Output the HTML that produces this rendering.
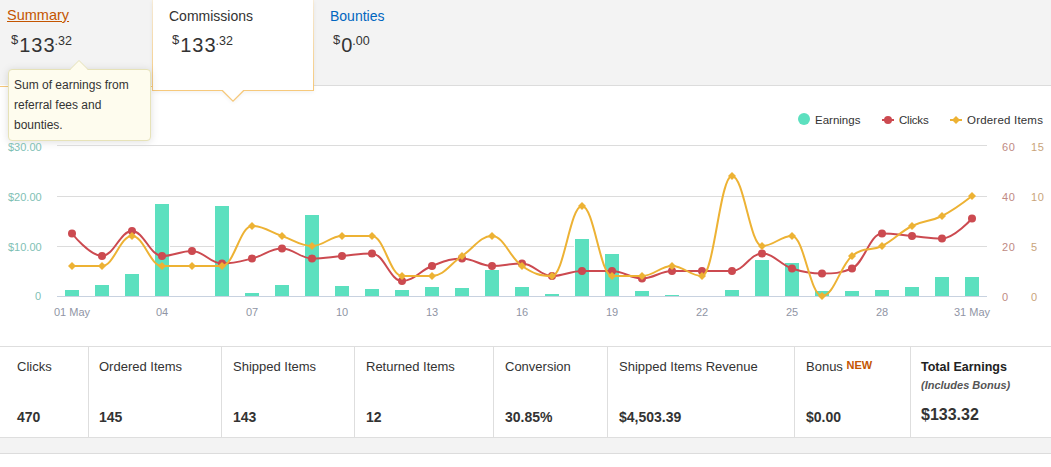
<!DOCTYPE html>
<html><head><meta charset="utf-8">
<style>
*{margin:0;padding:0;box-sizing:border-box}
html,body{width:1051px;height:467px;overflow:hidden;background:#fff;font-family:"Liberation Sans",sans-serif;color:#333;position:relative}
.abs{position:absolute;white-space:nowrap}
.tabbar{position:absolute;left:0;top:0;width:1051px;height:85px;background:#f3f3f3}
.grayline{position:absolute;left:314px;top:85px;width:737px;height:1px;background:#dcdcdc}
.orgline{position:absolute;left:0;top:86px;width:152px;height:1px;background:#f6c97c}
.tabt{font-size:14px;line-height:16px}
.amt{font-size:20px;line-height:24px;color:#333}
.amt .d{margin-left:1px;letter-spacing:1px}
.amt .c2{margin-left:-1px}
.amt sup{font-size:11px;vertical-align:top;position:relative;top:-2px;color:#333}
.amt .c{font-size:12.5px;vertical-align:top;position:relative;top:-4px;color:#333}
.amt .s{top:-5px;font-size:13px}
.tip{position:absolute;left:8px;top:69px;width:143px;height:72px;background:#fefcee;border:1px solid #e6e2b8;border-radius:4px;box-shadow:0 1px 8px rgba(0,0,0,.13);font-size:12px;line-height:20px;color:#333;padding:5px 0 0 5px}
.leg{font-size:11.5px;color:#333;line-height:14px;margin-top:1px}
.yl{position:absolute;left:8px;font-size:11px;line-height:12px;color:#7fbfb5;white-space:nowrap}
.yr1{position:absolute;left:1002px;font-size:11px;letter-spacing:.6px;line-height:12px;color:#c08a84;white-space:nowrap}
.yr2{position:absolute;left:1031px;font-size:11px;letter-spacing:.6px;line-height:12px;color:#c9a47a;white-space:nowrap}
.xl{position:absolute;top:305px;width:100px;text-align:center;font-size:11px;line-height:14px;color:#9095a5;white-space:nowrap}
.stats{position:absolute;left:0;top:346px;width:1051px;height:92px;border-top:1px solid #dedede;border-bottom:1px solid #dedede}
.div{position:absolute;top:347px;width:1px;height:90px;background:#dedede}
.band{position:absolute;left:0;top:438px;width:1051px;height:16px;background:#f3f3f3;border-bottom:1px solid #dcdcdc}
.sl{position:absolute;top:359px;font-size:13px;line-height:16px;color:#333;white-space:nowrap}
.sv{position:absolute;top:409px;font-size:14px;line-height:16px;font-weight:bold;color:#333;white-space:nowrap}
</style></head><body>
<div class="tabbar"></div>
<div class="grayline"></div>
<div class="orgline"></div>
<svg class="abs" style="left:0;top:0" width="1051" height="110">
  <defs>
    <linearGradient id="bg1" x1="0" y1="0" x2="0" y2="1">
      <stop offset="0" stop-color="#f6c97c" stop-opacity="0.25"/>
      <stop offset="1" stop-color="#f6c97c" stop-opacity="1"/>
    </linearGradient>
    <filter id="sh" x="-10%" y="-10%" width="120%" height="140%"><feGaussianBlur stdDeviation="2"/></filter>
  </defs>
  <path d="M152 0 V90.5 H222.5 L233 101 L243.5 90.5 H314 V0 Z" fill="#000" opacity="0.05" filter="url(#sh)" transform="translate(0,2)"/>
  <path d="M152.5 0 V90.5 H222.5 L233 101 L243.5 90.5 H313.5 V0 Z" fill="#fff"/>
  <rect x="152" y="0" width="1" height="90" fill="url(#bg1)"/>
  <rect x="313" y="0" width="1" height="90" fill="url(#bg1)"/>
  <rect x="152" y="84" width="1" height="7" fill="#f6c97c"/>
  <rect x="313" y="84" width="1" height="7" fill="#f6c97c"/>
  <rect x="152" y="90" width="71" height="1" fill="#f6c97c"/>
  <rect x="243" y="90" width="71" height="1" fill="#f6c97c"/>
  <path d="M222.3 90.5 L233 101.2 L243.7 90.5" fill="none" stroke="#f6c97c" stroke-width="1.3"/>
</svg>
<div class="abs tabt" style="left:7px;top:7px;color:#c45500;text-decoration:underline;font-size:14.5px">Summary</div>
<div class="abs amt" style="left:11px;top:33px"><span class="c s">$</span><span class="d">133</span><span class="c c2">.32</span></div>
<div class="abs tabt" style="left:169px;top:8px;color:#333">Commissions</div>
<div class="abs amt" style="left:172px;top:33px"><span class="c s">$</span><span class="d">133</span><span class="c c2">.32</span></div>
<div class="abs tabt" style="left:330px;top:8px;color:#0066c0">Bounties</div>
<div class="abs amt" style="left:333px;top:33px"><span class="c s">$</span><span class="d">0</span><span class="c c2">.00</span></div>

<!-- tooltip -->
<div class="tip">Sum of earnings from<br>referral fees and<br>bounties.</div>
<svg class="abs" style="left:0;top:0" width="160" height="80">
  <path d="M70 69.5 L79 60.5 L88 69.5" fill="#fefcee" stroke="#e6e2b8" stroke-width="1"/>
  <rect x="71" y="69" width="16" height="2" fill="#fefcee"/>
</svg>

<!-- legend -->
<svg class="abs" style="left:780px;top:108px" width="271" height="24">
  <circle cx="24" cy="11" r="6" fill="#5ce0bf"/>
  <rect x="102" y="11" width="12" height="2" fill="#cc4a50"/>
  <circle cx="108" cy="12" r="4" fill="#cc4a50"/>
  <rect x="170" y="11" width="12" height="2" fill="#edb234"/>
  <path d="M176 8 L180 12 L176 16 L172 12 Z" fill="#edb234"/>
</svg>
<div class="abs leg" style="left:815px;top:112px">Earnings</div>
<div class="abs leg" style="left:899px;top:112px;letter-spacing:-.2px">Clicks</div>
<div class="abs leg" style="left:967px;top:112px;letter-spacing:.2px">Ordered Items</div>

<svg width="1051" height="230" viewBox="0 100 1051 230" style="position:absolute;left:0;top:100px">
<rect x="57" y="145" width="930" height="1" fill="#dcdcdc"/>
<rect x="57" y="196" width="930" height="1" fill="#dcdcdc"/>
<rect x="57" y="246" width="930" height="1" fill="#dcdcdc"/>
<rect x="64" y="289" width="16" height="7" fill="#fff"/>
<rect x="65" y="290" width="14" height="6" fill="#5ce0bf"/>
<rect x="94" y="284" width="16" height="12" fill="#fff"/>
<rect x="95" y="285" width="14" height="11" fill="#5ce0bf"/>
<rect x="124" y="273" width="16" height="23" fill="#fff"/>
<rect x="125" y="274" width="14" height="22" fill="#5ce0bf"/>
<rect x="154" y="203" width="16" height="93" fill="#fff"/>
<rect x="155" y="204" width="14" height="92" fill="#5ce0bf"/>
<rect x="214" y="205" width="16" height="91" fill="#fff"/>
<rect x="215" y="206" width="14" height="90" fill="#5ce0bf"/>
<rect x="244" y="292" width="16" height="4" fill="#fff"/>
<rect x="245" y="293" width="14" height="3" fill="#5ce0bf"/>
<rect x="274" y="284" width="16" height="12" fill="#fff"/>
<rect x="275" y="285" width="14" height="11" fill="#5ce0bf"/>
<rect x="304" y="214" width="16" height="82" fill="#fff"/>
<rect x="305" y="215" width="14" height="81" fill="#5ce0bf"/>
<rect x="334" y="285" width="16" height="11" fill="#fff"/>
<rect x="335" y="286" width="14" height="10" fill="#5ce0bf"/>
<rect x="364" y="288" width="16" height="8" fill="#fff"/>
<rect x="365" y="289" width="14" height="7" fill="#5ce0bf"/>
<rect x="394" y="289" width="16" height="7" fill="#fff"/>
<rect x="395" y="290" width="14" height="6" fill="#5ce0bf"/>
<rect x="424" y="286" width="16" height="10" fill="#fff"/>
<rect x="425" y="287" width="14" height="9" fill="#5ce0bf"/>
<rect x="454" y="287" width="16" height="9" fill="#fff"/>
<rect x="455" y="288" width="14" height="8" fill="#5ce0bf"/>
<rect x="484" y="269" width="16" height="27" fill="#fff"/>
<rect x="485" y="270" width="14" height="26" fill="#5ce0bf"/>
<rect x="514" y="286" width="16" height="10" fill="#fff"/>
<rect x="515" y="287" width="14" height="9" fill="#5ce0bf"/>
<rect x="544" y="293" width="16" height="3" fill="#fff"/>
<rect x="545" y="294" width="14" height="2" fill="#5ce0bf"/>
<rect x="574" y="238" width="16" height="58" fill="#fff"/>
<rect x="575" y="239" width="14" height="57" fill="#5ce0bf"/>
<rect x="604" y="253" width="16" height="43" fill="#fff"/>
<rect x="605" y="254" width="14" height="42" fill="#5ce0bf"/>
<rect x="634" y="290" width="16" height="6" fill="#fff"/>
<rect x="635" y="291" width="14" height="5" fill="#5ce0bf"/>
<rect x="664" y="294" width="16" height="2" fill="#fff"/>
<rect x="665" y="295" width="14" height="1" fill="#5ce0bf"/>
<rect x="724" y="289" width="16" height="7" fill="#fff"/>
<rect x="725" y="290" width="14" height="6" fill="#5ce0bf"/>
<rect x="754" y="259" width="16" height="37" fill="#fff"/>
<rect x="755" y="260" width="14" height="36" fill="#5ce0bf"/>
<rect x="784" y="262" width="16" height="34" fill="#fff"/>
<rect x="785" y="263" width="14" height="33" fill="#5ce0bf"/>
<rect x="814" y="290" width="16" height="6" fill="#fff"/>
<rect x="815" y="291" width="14" height="5" fill="#5ce0bf"/>
<rect x="844" y="290" width="16" height="6" fill="#fff"/>
<rect x="845" y="291" width="14" height="5" fill="#5ce0bf"/>
<rect x="874" y="289" width="16" height="7" fill="#fff"/>
<rect x="875" y="290" width="14" height="6" fill="#5ce0bf"/>
<rect x="904" y="286" width="16" height="10" fill="#fff"/>
<rect x="905" y="287" width="14" height="9" fill="#5ce0bf"/>
<rect x="934" y="276" width="16" height="20" fill="#fff"/>
<rect x="935" y="277" width="14" height="19" fill="#5ce0bf"/>
<rect x="964" y="276" width="16" height="20" fill="#fff"/>
<rect x="965" y="277" width="14" height="19" fill="#5ce0bf"/>
<rect x="57" y="296" width="930" height="1" fill="#c8d2e0"/>
<path d="M 72 233.5 C 72.00 233.50 90.00 256.00 102 256.0 C 114.00 256.00 120.00 231.00 132 231.0 C 144.00 231.00 150.00 256.00 162 256.0 C 174.00 256.00 180.00 251.00 192 251.0 C 204.00 251.00 210.00 263.50 222 263.5 C 234.00 263.50 240.00 261.50 252 258.5 C 264.00 255.50 270.00 248.50 282 248.5 C 294.00 248.50 300.00 258.50 312 258.5 C 324.00 258.50 330.00 257.00 342 256.0 C 354.00 255.00 360.00 253.50 372 253.5 C 384.00 253.50 390.00 281.00 402 281.0 C 414.00 281.00 420.00 270.50 432 266.0 C 444.00 261.50 450.00 258.50 462 258.5 C 474.00 258.50 480.00 266.00 492 266.0 C 504.00 266.00 510.00 263.50 522 263.5 C 534.00 263.50 540.00 276.00 552 276.0 C 564.00 276.00 570.00 271.00 582 271.0 C 594.00 271.00 600.00 271.00 612 271.0 C 624.00 271.00 630.00 278.50 642 278.5 C 654.00 278.50 660.00 271.00 672 271.0 C 684.00 271.00 690.00 271.00 702 271.0 C 714.00 271.00 720.00 271.00 732 271.0 C 744.00 271.00 750.00 253.50 762 253.5 C 774.00 253.50 780.00 264.50 792 268.5 C 804.00 272.50 810.00 273.50 822 273.5 C 834.00 273.50 840.00 273.50 852 268.5 C 864.00 263.50 870.00 233.50 882 233.5 C 894.00 233.50 900.00 235.00 912 236.0 C 924.00 237.00 930.00 238.50 942 238.5 C 954.00 238.50 972.00 218.50 972 218.5" fill="none" stroke="#cc4a50" stroke-width="2" stroke-linejoin="round" stroke-linecap="round"/>
<circle cx="72" cy="233.5" r="4" fill="#cc4a50"/>
<circle cx="102" cy="256.0" r="4" fill="#cc4a50"/>
<circle cx="132" cy="231.0" r="4" fill="#cc4a50"/>
<circle cx="162" cy="256.0" r="4" fill="#cc4a50"/>
<circle cx="192" cy="251.0" r="4" fill="#cc4a50"/>
<circle cx="222" cy="263.5" r="4" fill="#cc4a50"/>
<circle cx="252" cy="258.5" r="4" fill="#cc4a50"/>
<circle cx="282" cy="248.5" r="4" fill="#cc4a50"/>
<circle cx="312" cy="258.5" r="4" fill="#cc4a50"/>
<circle cx="342" cy="256.0" r="4" fill="#cc4a50"/>
<circle cx="372" cy="253.5" r="4" fill="#cc4a50"/>
<circle cx="402" cy="281.0" r="4" fill="#cc4a50"/>
<circle cx="432" cy="266.0" r="4" fill="#cc4a50"/>
<circle cx="462" cy="258.5" r="4" fill="#cc4a50"/>
<circle cx="492" cy="266.0" r="4" fill="#cc4a50"/>
<circle cx="522" cy="263.5" r="4" fill="#cc4a50"/>
<circle cx="552" cy="276.0" r="4" fill="#cc4a50"/>
<circle cx="582" cy="271.0" r="4" fill="#cc4a50"/>
<circle cx="612" cy="271.0" r="4" fill="#cc4a50"/>
<circle cx="642" cy="278.5" r="4" fill="#cc4a50"/>
<circle cx="672" cy="271.0" r="4" fill="#cc4a50"/>
<circle cx="702" cy="271.0" r="4" fill="#cc4a50"/>
<circle cx="732" cy="271.0" r="4" fill="#cc4a50"/>
<circle cx="762" cy="253.5" r="4" fill="#cc4a50"/>
<circle cx="792" cy="268.5" r="4" fill="#cc4a50"/>
<circle cx="822" cy="273.5" r="4" fill="#cc4a50"/>
<circle cx="852" cy="268.5" r="4" fill="#cc4a50"/>
<circle cx="882" cy="233.5" r="4" fill="#cc4a50"/>
<circle cx="912" cy="236.0" r="4" fill="#cc4a50"/>
<circle cx="942" cy="238.5" r="4" fill="#cc4a50"/>
<circle cx="972" cy="218.5" r="4" fill="#cc4a50"/>
<path d="M 72 266 C 72.00 266.00 90.00 266.00 102 266 C 114.00 266.00 120.00 236.00 132 236 C 144.00 236.00 150.00 266.00 162 266 C 174.00 266.00 180.00 266.00 192 266 C 204.00 266.00 210.00 266.00 222 266 C 234.00 266.00 240.00 226.00 252 226 C 264.00 226.00 270.00 232.00 282 236 C 294.00 240.00 300.00 246.00 312 246 C 324.00 246.00 330.00 236.00 342 236 C 354.00 236.00 360.00 236.00 372 236 C 384.00 236.00 390.00 276.00 402 276 C 414.00 276.00 420.00 276.00 432 276 C 444.00 276.00 450.00 264.00 462 256 C 474.00 248.00 480.00 236.00 492 236 C 504.00 236.00 510.00 258.00 522 266 C 534.00 274.00 540.00 276.00 552 276 C 564.00 276.00 570.00 206.00 582 206 C 594.00 206.00 600.00 276.00 612 276 C 624.00 276.00 630.00 276.00 642 276 C 654.00 276.00 660.00 266.00 672 266 C 684.00 266.00 690.00 276.00 702 276 C 714.00 276.00 720.00 176.00 732 176 C 744.00 176.00 750.00 246.00 762 246 C 774.00 246.00 780.00 236.00 792 236 C 804.00 236.00 810.00 296.00 822 296 C 834.00 296.00 840.00 266.00 852 256 C 864.00 246.00 870.00 252.00 882 246 C 894.00 240.00 900.00 232.00 912 226 C 924.00 220.00 930.00 222.00 942 216 C 954.00 210.00 972.00 196.00 972 196" fill="none" stroke="#edb234" stroke-width="2" stroke-linejoin="round" stroke-linecap="round"/>
<path d="M 72 262 L 76 266 L 72 270 L 68 266 Z" fill="#edb234"/>
<path d="M 102 262 L 106 266 L 102 270 L 98 266 Z" fill="#edb234"/>
<path d="M 132 232 L 136 236 L 132 240 L 128 236 Z" fill="#edb234"/>
<path d="M 162 262 L 166 266 L 162 270 L 158 266 Z" fill="#edb234"/>
<path d="M 192 262 L 196 266 L 192 270 L 188 266 Z" fill="#edb234"/>
<path d="M 222 262 L 226 266 L 222 270 L 218 266 Z" fill="#edb234"/>
<path d="M 252 222 L 256 226 L 252 230 L 248 226 Z" fill="#edb234"/>
<path d="M 282 232 L 286 236 L 282 240 L 278 236 Z" fill="#edb234"/>
<path d="M 312 242 L 316 246 L 312 250 L 308 246 Z" fill="#edb234"/>
<path d="M 342 232 L 346 236 L 342 240 L 338 236 Z" fill="#edb234"/>
<path d="M 372 232 L 376 236 L 372 240 L 368 236 Z" fill="#edb234"/>
<path d="M 402 272 L 406 276 L 402 280 L 398 276 Z" fill="#edb234"/>
<path d="M 432 272 L 436 276 L 432 280 L 428 276 Z" fill="#edb234"/>
<path d="M 462 252 L 466 256 L 462 260 L 458 256 Z" fill="#edb234"/>
<path d="M 492 232 L 496 236 L 492 240 L 488 236 Z" fill="#edb234"/>
<path d="M 522 262 L 526 266 L 522 270 L 518 266 Z" fill="#edb234"/>
<path d="M 552 272 L 556 276 L 552 280 L 548 276 Z" fill="#edb234"/>
<path d="M 582 202 L 586 206 L 582 210 L 578 206 Z" fill="#edb234"/>
<path d="M 612 272 L 616 276 L 612 280 L 608 276 Z" fill="#edb234"/>
<path d="M 642 272 L 646 276 L 642 280 L 638 276 Z" fill="#edb234"/>
<path d="M 672 262 L 676 266 L 672 270 L 668 266 Z" fill="#edb234"/>
<path d="M 702 272 L 706 276 L 702 280 L 698 276 Z" fill="#edb234"/>
<path d="M 732 172 L 736 176 L 732 180 L 728 176 Z" fill="#edb234"/>
<path d="M 762 242 L 766 246 L 762 250 L 758 246 Z" fill="#edb234"/>
<path d="M 792 232 L 796 236 L 792 240 L 788 236 Z" fill="#edb234"/>
<path d="M 822 292 L 826 296 L 822 300 L 818 296 Z" fill="#edb234"/>
<path d="M 852 252 L 856 256 L 852 260 L 848 256 Z" fill="#edb234"/>
<path d="M 882 242 L 886 246 L 882 250 L 878 246 Z" fill="#edb234"/>
<path d="M 912 222 L 916 226 L 912 230 L 908 226 Z" fill="#edb234"/>
<path d="M 942 212 L 946 216 L 942 220 L 938 216 Z" fill="#edb234"/>
<path d="M 972 192 L 976 196 L 972 200 L 968 196 Z" fill="#edb234"/>
</svg>
<div class="yl" style="top:141px">$30.00</div>
<div class="yl" style="top:191px">$20.00</div>
<div class="yl" style="top:241px">$10.00</div>
<div class="yl" style="top:290px;left:35px">0</div>
<div class="yr1" style="top:140.5px">60</div>
<div class="yr2" style="top:140.5px">15</div>
<div class="yr1" style="top:190.5px">40</div>
<div class="yr2" style="top:190.5px">10</div>
<div class="yr1" style="top:240.5px">20</div>
<div class="yr2" style="top:240.5px">5</div>
<div class="yr1" style="top:290.5px">0</div>
<div class="yr2" style="top:290.5px">0</div>
<div class="xl" style="left:22px">01 May</div>
<div class="xl" style="left:112px">04</div>
<div class="xl" style="left:202px">07</div>
<div class="xl" style="left:292px">10</div>
<div class="xl" style="left:382px">13</div>
<div class="xl" style="left:472px">16</div>
<div class="xl" style="left:562px">19</div>
<div class="xl" style="left:652px">22</div>
<div class="xl" style="left:742px">25</div>
<div class="xl" style="left:832px">28</div>
<div class="xl" style="left:922px">31 May</div>

<!-- stats -->
<div class="stats"></div>
<div class="div" style="left:88px"></div>
<div class="div" style="left:221px"></div>
<div class="div" style="left:354px"></div>
<div class="div" style="left:493px"></div>
<div class="div" style="left:607px"></div>
<div class="div" style="left:794px"></div>
<div class="div" style="left:910px"></div>
<div class="band"></div>
<div class="sl" style="left:17px">Clicks</div>
<div class="sv" style="left:17px">470</div>
<div class="sl" style="left:99px">Ordered Items</div>
<div class="sv" style="left:99px">145</div>
<div class="sl" style="left:233px">Shipped Items</div>
<div class="sv" style="left:233px">143</div>
<div class="sl" style="left:366px">Returned Items</div>
<div class="sv" style="left:366px">12</div>
<div class="sl" style="left:505px">Conversion</div>
<div class="sv" style="left:505px">30.85%</div>
<div class="sl" style="left:619px">Shipped Items Revenue</div>
<div class="sv" style="left:619px">$4,503.39</div>
<div class="sl" style="left:806px">Bonus <span style="font-weight:bold;color:#c45500;font-size:11px;position:relative;top:-2px">NEW</span></div>
<div class="sv" style="left:806px">$0.00</div>
<div class="sl" style="left:921px;font-weight:bold;font-size:12.5px;color:#222">Total Earnings</div>
<div class="sl" style="left:921px;top:377px;font-style:italic;font-weight:bold;font-size:11px;color:#555">(Includes Bonus)</div>
<div class="sv" style="left:921px;top:406px;font-size:16px;line-height:18px">$133.32</div>
</body></html>
